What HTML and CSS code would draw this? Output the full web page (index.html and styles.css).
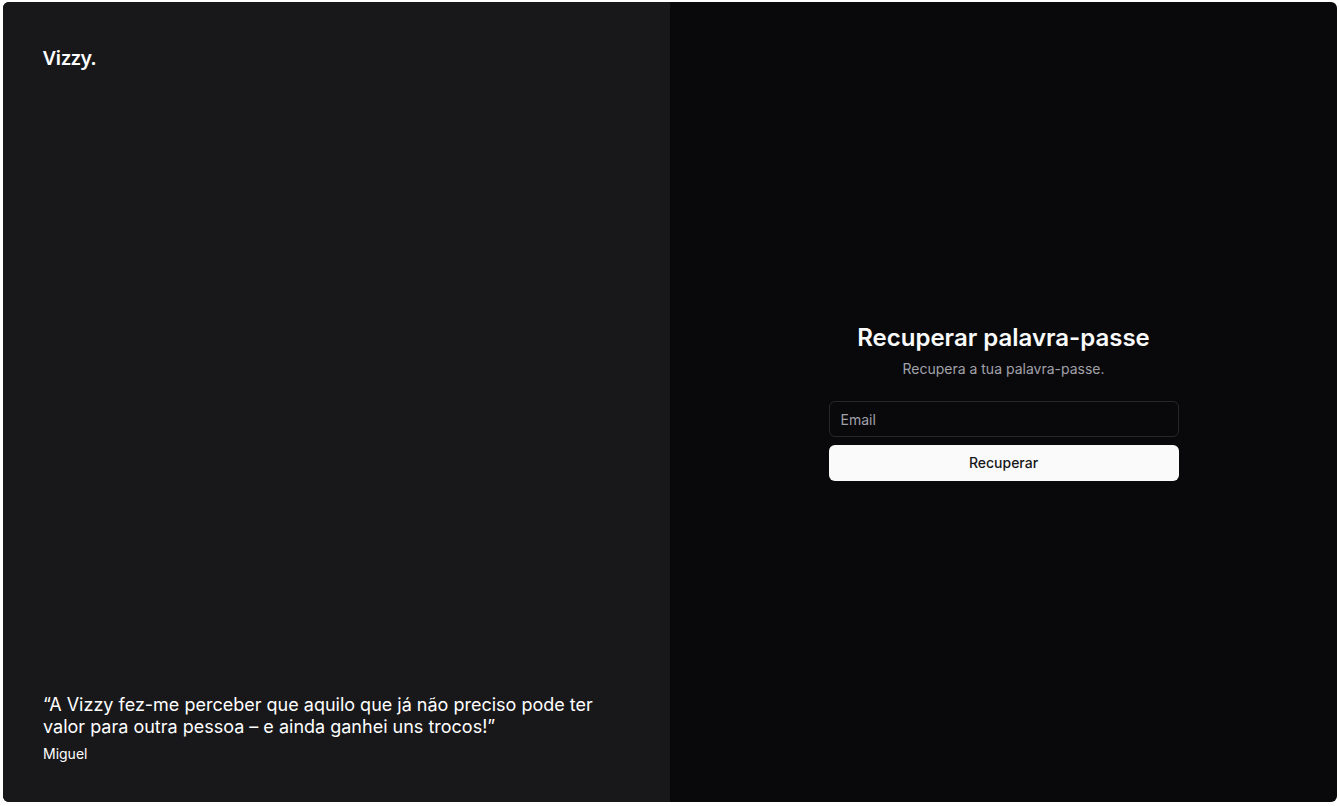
FILE: index.html
```html
<!DOCTYPE html>
<html lang="pt">
<head>
<meta charset="utf-8">
<title>Vizzy – Recuperar palavra-passe</title>
<link rel="stylesheet" href="styles.css">
</head>
<body>
<div class="shell">
  <aside class="intro">
    <a class="brand" href="#">Vizzy.</a>
    <blockquote class="quote">
      <p class="quote-text">“A Vizzy fez-me perceber que aquilo que já não preciso pode ter valor para outra pessoa – e ainda ganhei uns trocos!”</p>
      <footer class="quote-author">Miguel</footer>
    </blockquote>
  </aside>
  <main class="panel">
    <form class="recover">
      <h1 class="title">Recuperar palavra-passe</h1>
      <p class="subtitle">Recupera a tua palavra-passe.</p>
      <div class="fields">
        <input class="field" type="email" placeholder="Email" aria-label="Email">
        <button class="submit" type="submit">Recuperar</button>
      </div>
    </form>
  </main>
</div>
</body>
</html>
```
FILE: styles.css
```css
* { box-sizing: border-box; margin: 0; }
body {
  min-height: 100vh;
  display: flex;
  padding: 2px 3px 4px;
  background: #fff;
  color: #fafafa;
  font-family: Inter, "Liberation Sans", sans-serif;
  font-size: 14px;
  line-height: 20px;
}
.shell {
  flex: 1;
  display: grid;
  grid-template-columns: 1fr 1fr;
  border-radius: 6px;
  overflow: hidden;
  background: #09090b;
}
.intro {
  display: flex;
  flex-direction: column;
  justify-content: space-between;
  padding: 40px 40px 38px;
  background: #18181b;
  color: #fff;
}
.brand {
  color: inherit;
  text-decoration: none;
  font-family: "Noto Sans", "Open Sans", sans-serif;
  font-size: 20px;
  font-weight: 600;
  line-height: 32px;
}
.quote { display: grid; gap: 6px; }
.quote-text { font-size: 18px; line-height: 22px; }
.panel {
  display: flex;
  align-items: center;
  justify-content: center;
  padding-bottom: 1px;
}
.recover { width: 350px; text-align: center; }
.title {
  font-size: 24px;
  font-weight: 600;
  line-height: 32px;
}
.subtitle { margin-top: 5px; color: #a1a1aa; }
.fields { display: grid; gap: 8px; margin-top: 22px; }
.field, .submit {
  width: 100%;
  height: 36px;
  padding: 0 11px;
  border-radius: 6px;
  font: inherit;
}
.field {
  border: 1px solid #27272a;
  background: transparent;
  color: #fafafa;
}
.field::placeholder { color: #a1a1aa; opacity: 1; }
.submit {
  border: 0;
  background: #fafafa;
  color: #18181b;
  font-weight: 500;
}
```
